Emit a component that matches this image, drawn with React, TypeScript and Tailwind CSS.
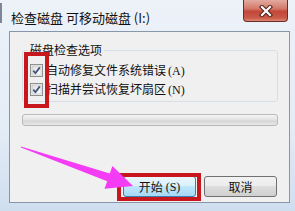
import React from "react";

function CheckBox() {
  return (
    <svg width="13" height="13" viewBox="0 0 13 13" className="shrink-0">
      <defs>
        <linearGradient id="cbg" x1="0" y1="0" x2="1" y2="1">
          <stop offset="0" stopColor="#dcdcdc" />
          <stop offset="1" stopColor="#ffffff" />
        </linearGradient>
      </defs>
      <rect x="0.5" y="0.5" width="12" height="12" fill="#f4f4f4" stroke="#8e8f8f" />
      <rect x="2" y="2" width="9" height="9" fill="url(#cbg)" stroke="#b8b8b8" strokeWidth="0.6" />
      <path d="M3.3 6.6 L5.4 9.2 L9.8 3.4" fill="none" stroke="#3e5580" strokeWidth="1.8" strokeLinejoin="round" />
    </svg>
  );
}

export default function App() {
  return (
    <div className="w-[295px] h-[211px] relative overflow-hidden flex flex-col bg-[linear-gradient(to_bottom,#edf2f9_0%,#e4ecf6_60%,#cfdeef_100%)] font-['Noto_Sans_CJK_SC',sans-serif] text-[#111]">
      {/* left edge of window */}
      <div className="absolute left-0 top-[3px] w-[2px] h-[20px] bg-[#7d8796]" />
      {/* title bar */}
      <div className="h-[31px] shrink-0 flex items-start justify-between pl-[11px] pr-[7px]">
        <div className="pt-[10px] text-[13px] leading-[16px] whitespace-nowrap">检查磁盘 可移动磁盘 (I:)</div>
        <div className="w-[45px] h-[22px] rounded-b-[4px] border border-t-0 border-[#6e2c27] bg-[linear-gradient(to_bottom,#e3aaa0_0%,#d47a6c_40%,#c2473a_55%,#c95a48_85%,#dc8a74_100%)] flex items-center justify-center">
          <svg width="16" height="12" viewBox="0 0 16 12">
            <path d="M4 2 L12 10 M12 2 L4 10" stroke="#52201b" strokeWidth="4.2" strokeLinecap="square" />
            <path d="M4 2 L12 10 M12 2 L4 10" stroke="#ffffff" strokeWidth="2.2" strokeLinecap="square" />
          </svg>
        </div>
      </div>

      {/* content panel */}
      <div className="relative ml-[9px] mr-[5px] h-[172px] shrink-0 border border-[#8896a8] bg-[#f0f0f0] flex flex-col">
        <fieldset className="mt-[11px] ml-[12px] mr-[11px] border border-[#d5dfe5] rounded-[3px] pl-[7px] pt-[4px] pb-[2px]">
          <legend className="-ml-[2px] px-[2px] text-[12px] leading-[14px]">磁盘检查选项</legend>
          <div className="h-[19px] flex items-center">
            <CheckBox />
            <span className="ml-[3px] text-[12px] leading-[14px] whitespace-nowrap">
              自动修复文件系统错误<span className="ml-[2px] font-['Liberation_Serif',serif]">(A)</span>
            </span>
          </div>
          <div className="h-[19px] flex items-center">
            <CheckBox />
            <span className="ml-[3px] text-[12px] leading-[14px] whitespace-nowrap">
              扫描并尝试恢复坏扇区<span className="ml-[2px] font-['Liberation_Serif',serif]">(N)</span>
            </span>
          </div>
        </fieldset>

        <div className="mt-[12px] ml-[12px] mr-[11px] h-[12px] rounded-[3px] border border-[#b9b9b9] bg-[linear-gradient(to_bottom,#f5f5f5_0%,#e4e4e4_45%,#d6d6d6_60%,#e8e8e8_100%)]" />

        <div className="mt-[50px] mr-[12px] flex justify-end gap-[8px]">
          <div className="relative">
            <button className="w-[73px] h-[21px] rounded-[3px] border border-[#3c7fb1] bg-[linear-gradient(to_bottom,#eaf6fd_0%,#d9f0fc_50%,#bee6fd_50%,#a7d9f5_100%)] text-[12px] leading-[14px] flex items-center justify-center">
              开始<span className="ml-[3px] font-['Liberation_Serif',serif]">(S)</span>
            </button>
            <div className="absolute -left-[6px] -top-[3px] -right-[5px] -bottom-[4px] border-4 border-[#c8161d]" />
          </div>
          <button className="w-[73px] h-[21px] rounded-[3px] border border-[#707070] bg-[linear-gradient(to_bottom,#f2f2f2_0%,#ebebeb_50%,#dddddd_50%,#cfcfcf_100%)] text-[12px] leading-[14px] flex items-center justify-center">
            取消
          </button>
        </div>

        {/* red highlight around checkboxes */}
        <div className="absolute left-[14px] top-[20px] w-[25px] h-[56px] border-4 border-[#c8161d]" />
      </div>

      {/* magenta arrow */}
      <svg className="absolute inset-0 pointer-events-none" width="295" height="211" viewBox="0 0 295 211">
        <polygon
          points="21,146.4 109.8,173.6 112.4,166.1 133,186 104.5,188.7 107.2,181.2 21,147.6"
          fill="#f43cf4"
        />
      </svg>
    </div>
  );
}
